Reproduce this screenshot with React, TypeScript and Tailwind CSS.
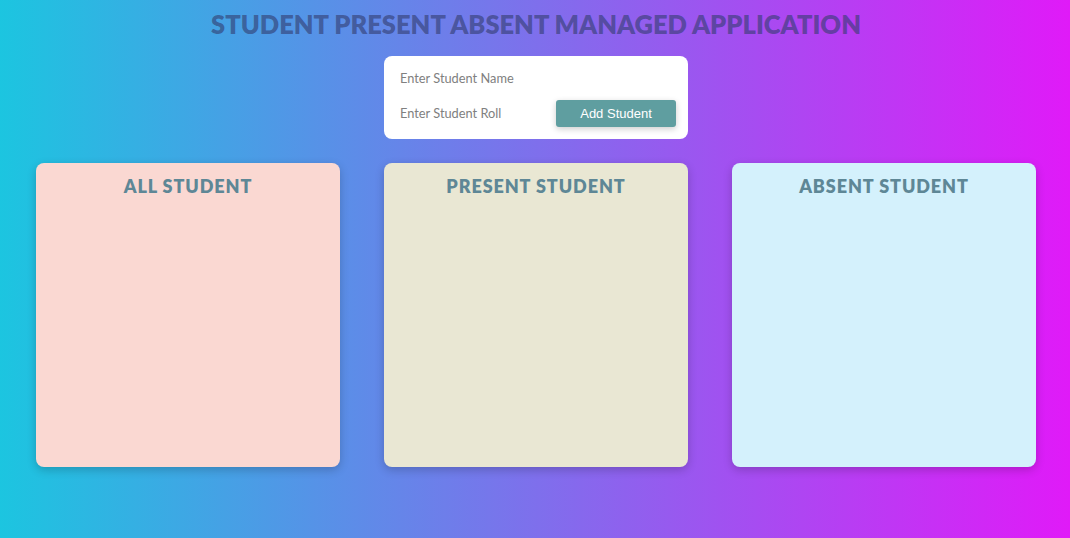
import React from "react";

export default function App() {
  const cards = [
    { title: "ALL STUDENT", bg: "bg-[#fad8d2]" },
    { title: "PRESENT STUDENT", bg: "bg-[#e9e7d3]" },
    { title: "ABSENT STUDENT", bg: "bg-[#d4f1fc]" },
  ];
  return (
    <div
      className="w-full h-[538px] bg-[linear-gradient(to_right,#1cc5e0,#e01af8)] flex flex-col items-center"
      style={{ fontFamily: "Lato, 'Noto Sans', sans-serif" }}
    >
      <h1 className="mt-[9px] ml-[2px] h-[30px] leading-[30px] text-[25.5px] font-extrabold text-[rgba(50,60,110,0.62)]">
        STUDENT PRESENT ABSENT MANAGED APPLICATION
      </h1>
      <div className="mt-[17px] ml-[2px] w-[304px] h-[83px] bg-white rounded-[8px] flex flex-col px-4 pt-[14px]">
        <input
          placeholder="Enter Student Name"
          className="h-[18px] text-[12.8px] text-[#555] placeholder:text-[#808080] outline-none bg-transparent"
        />
        <div className="flex items-center justify-between mt-[12px]">
          <input
            placeholder="Enter Student Roll"
            className="w-[140px] h-[18px] text-[12.8px] text-[#555] placeholder:text-[#808080] outline-none bg-transparent"
          />
          <button
            className="mr-[-4px] w-[120px] h-[27px] rounded-[3px] bg-[#5f9ea0] text-white text-[13px] shadow-[0_2px_6px_rgba(0,0,0,0.2)]"
            style={{ fontFamily: "'Liberation Sans', Arial, sans-serif" }}
          >
            Add Student
          </button>
        </div>
      </div>
      <div className="mt-[24px] w-full pl-[36px] flex gap-[44px]">
        {cards.map((c) => (
          <div
            key={c.title}
            className={`w-[304px] h-[304px] rounded-[8px] ${c.bg} shadow-[0_3px_10px_rgba(0,0,0,0.2)] flex flex-col items-center`}
          >
            <h2 className="mt-[12px] text-[18px] leading-[22px] font-extrabold tracking-[0.9px] text-[#5e8796]">
              {c.title}
            </h2>
          </div>
        ))}
      </div>
    </div>
  );
}
